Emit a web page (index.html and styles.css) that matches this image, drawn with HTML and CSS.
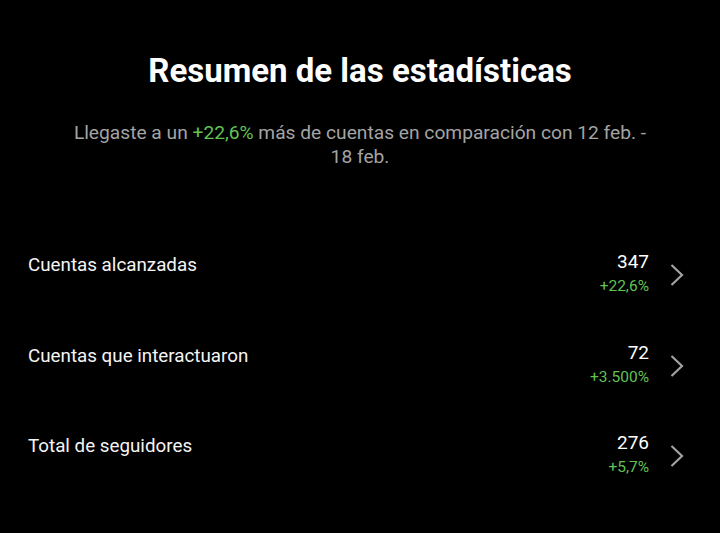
FILE: index.html
```html
<!DOCTYPE html>
<html lang="es">
<head>
<meta charset="utf-8">
<link rel="stylesheet" href="styles.css">
</head>
<body>
<main class="page">
  <h1 class="title">Resumen de las estadísticas</h1>
  <p class="subtitle">Llegaste a un <span class="green">+22,6%</span> más de cuentas en comparación con 12 feb. - 18 feb.</p>
  <ul class="list">
    <li class="row">
      <span class="label">Cuentas alcanzadas</span>
      <span class="values"><span class="num">347</span><span class="pct">+22,6%</span></span>
      <svg class="chev" viewBox="0 0 16 24" width="16" height="24"><path d="M2.5 2 L13 12 L2.5 22" fill="none" stroke="#a2a2a2" stroke-width="2.2"/></svg>
    </li>
    <li class="row">
      <span class="label">Cuentas que interactuaron</span>
      <span class="values"><span class="num">72</span><span class="pct">+3.500%</span></span>
      <svg class="chev" viewBox="0 0 16 24" width="16" height="24"><path d="M2.5 2 L13 12 L2.5 22" fill="none" stroke="#a2a2a2" stroke-width="2.2"/></svg>
    </li>
    <li class="row">
      <span class="label">Total de seguidores</span>
      <span class="values"><span class="num">276</span><span class="pct">+5,7%</span></span>
      <svg class="chev" viewBox="0 0 16 24" width="16" height="24"><path d="M2.5 2 L13 12 L2.5 22" fill="none" stroke="#a2a2a2" stroke-width="2.2"/></svg>
    </li>
  </ul>
</main>
</body>
</html>
```
FILE: styles.css
```css
html, body {
  margin: 0;
  padding: 0;
  background: #000;
}
body {
  width: 720px;
  height: 533px;
  overflow: hidden;
  font-family: Roboto, "Noto Sans", sans-serif;
  color: #f2f2f2;
}
.page {
  display: flex;
  flex-direction: column;
}
.title {
  margin: 52px 0 0;
  text-align: center;
  font-size: 33px;
  font-weight: 700;
  line-height: 38px;
  color: #fff;
}
.subtitle {
  margin: 31px 0 0;
  padding: 0 64px;
  text-align: center;
  font-size: 19.2px;
  line-height: 24px;
  color: #a4a4a4;
}
.green {
  color: #62c254;
}
.list {
  list-style: none;
  margin: 84px 0 0;
  padding: 0;
  display: flex;
  flex-direction: column;
}
.row {
  display: flex;
  align-items: flex-start;
  height: 90.5px;
  padding: 0 35px 0 28px;
}
.label {
  flex: 1;
  font-size: 18.8px;
  line-height: 24px;
  color: #f4f4f4;
}
.values {
  display: flex;
  flex-direction: column;
  align-items: flex-end;
  margin-top: -3px;
}
.num {
  font-size: 19px;
  line-height: 24px;
  color: #fff;
}
.pct {
  font-size: 15.5px;
  line-height: 24px;
  color: #62c254;
}
.chev {
  margin-left: 20px;
  margin-top: 10px;
}
```
